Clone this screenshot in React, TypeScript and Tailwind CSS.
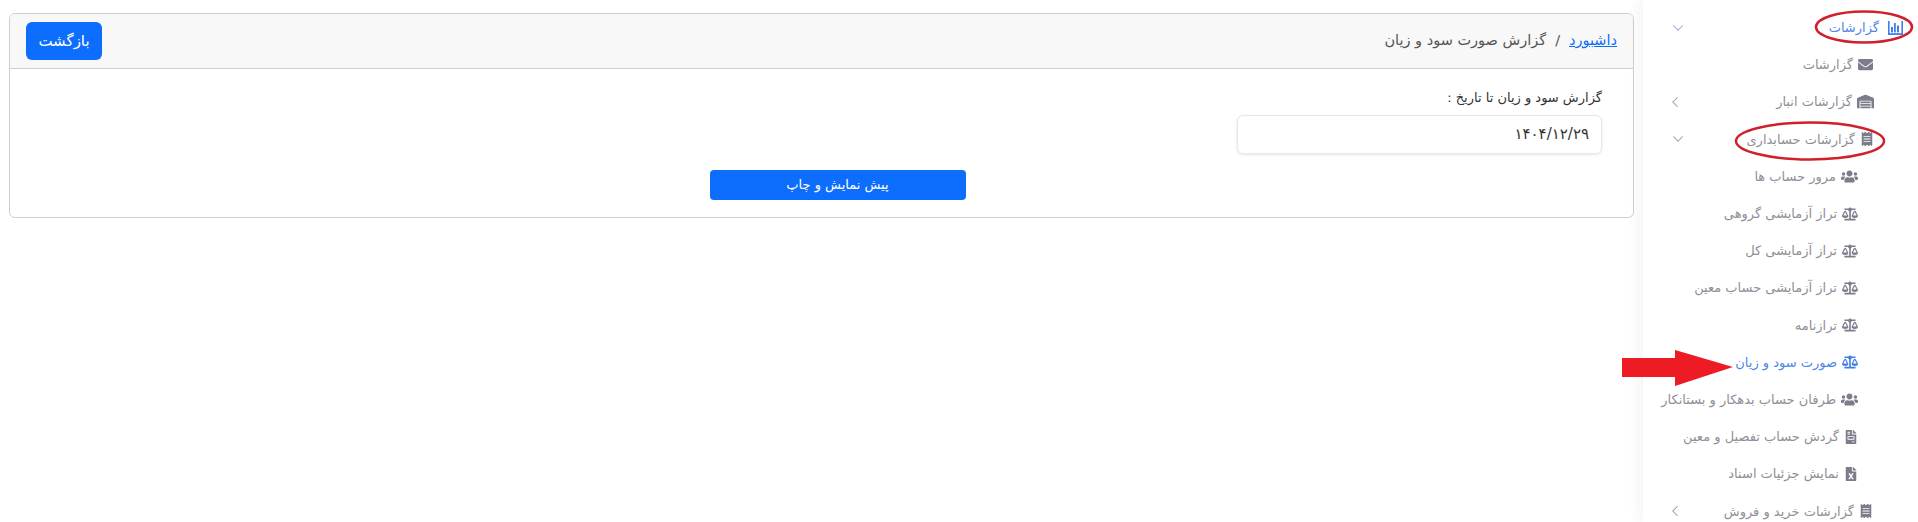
import { ChevronDown, ChevronLeft } from 'lucide-react';
import { FaBalanceScale, FaEnvelope, FaFileExcel, FaFileInvoice, FaReceipt, FaUsers, FaWarehouse } from 'react-icons/fa';

type IconComp = (props: { className?: string; size?: number }) => React.ReactNode;

type Item = {
  label: string;
  icon: IconComp;
  iconSize: number;
  right: string;
  active?: boolean;
  chevron?: 'down' | 'left';
};

function ChartIcon({ className }: { className?: string; size?: number }) {
  return (
    <svg className={className} width="15" height="14" viewBox="0 0 15 14" fill="currentColor">
      <rect x="0" y="0" width="1.6" height="14" />
      <rect x="13.4" y="0" width="1.6" height="14" />
      <rect x="0" y="12.2" width="15" height="1.8" />
      <rect x="3" y="6" width="2" height="5.4" />
      <rect x="6" y="2" width="1.8" height="9.4" />
      <rect x="9" y="4.5" width="2" height="6.9" />
    </svg>
  );
}

const items: Item[] = [
  { label: 'گزارشات', icon: ChartIcon, iconSize: 15, right: 'pr-[15px]', active: true, chevron: 'down' },
  { label: 'گزارشات', icon: FaEnvelope, iconSize: 15, right: 'pr-[45px]' },
  { label: 'گزارشات انبار', icon: FaWarehouse, iconSize: 17, right: 'pr-[44px]', chevron: 'left' },
  { label: 'گزارشات حسابداری', icon: FaReceipt, iconSize: 14, right: 'pr-[44px]', chevron: 'down' },
  { label: 'مرور حساب ها', icon: FaUsers, iconSize: 17, right: 'pr-[60px]' },
  { label: 'تراز آزمایشی گروهی', icon: FaBalanceScale, iconSize: 16, right: 'pr-[60px]' },
  { label: 'تراز آزمایشی کل', icon: FaBalanceScale, iconSize: 16, right: 'pr-[60px]' },
  { label: 'تراز آزمایشی حساب معین', icon: FaBalanceScale, iconSize: 16, right: 'pr-[60px]' },
  { label: 'ترازنامه', icon: FaBalanceScale, iconSize: 16, right: 'pr-[60px]' },
  { label: 'صورت سود و زیان', icon: FaBalanceScale, iconSize: 16, right: 'pr-[60px]', active: true },
  { label: 'طرفان حساب بدهکار و بستانکار', icon: FaUsers, iconSize: 17, right: 'pr-[60px]' },
  { label: 'گردش حساب تفصیل و معین', icon: FaFileInvoice, iconSize: 14, right: 'pr-[60px]' },
  { label: 'نمایش جزئیات اسناد', icon: FaFileExcel, iconSize: 14, right: 'pr-[60px]' },
  { label: 'گزارشات خرید و فروش', icon: FaReceipt, iconSize: 14, right: 'pr-[45px]', chevron: 'left' },
];

function SideItem({ item, first }: { item: Item; first: boolean }) {
  const Icon = item.icon;
  return (
    <div className={`flex h-[37.2px] shrink-0 items-center justify-between pl-[26px] ${item.right} ${item.active ? 'text-[#4f86e8]' : 'text-[#8f8f98]'}`}>
      <div className={`flex items-center ${first ? 'gap-[9px]' : 'gap-[5px]'}`}>
        <Icon className={item.active ? 'text-[#3f7fe6]' : 'text-[#7c7c8c]'} size={item.iconSize} />
        <span className="whitespace-nowrap text-[13px] leading-none">{item.label}</span>
      </div>
      {item.chevron === 'down' && <ChevronDown size={18} strokeWidth={1.4} className={item.active ? 'text-[#8ba8e0]' : 'text-[#999]'} />}
      {item.chevron === 'left' && <ChevronLeft size={18} strokeWidth={1.4} className="-ml-[3px] text-[#999]" />}
    </div>
  );
}

export default function App() {
  return (
    <div dir="rtl" className="relative flex h-[522px] w-[1918px] overflow-hidden bg-white font-['DejaVu_Sans',sans-serif]">
      <aside className="z-10 flex w-[275px] shrink-0 flex-col bg-white pt-[9px] shadow-[-6px_0_10px_rgba(80,80,120,0.05)]">
        {items.map((item, i) => (
          <SideItem key={i} item={item} first={i === 0} />
        ))}
      </aside>

      <main className="flex-1 pt-[13px] pr-[9px] pl-[9px]">
        <section className="h-[205px] overflow-hidden rounded-[6px] border border-[#cfcfcf] bg-white">
          <header className="flex h-[55px] items-center justify-between border-b border-[#cfcfcf] bg-[#f8f8f8] px-[16px]">
            <div className="flex items-center gap-[9px] text-[14.5px] text-[#555]">
              <a className="text-[#0d6efd] underline">داشبورد</a>
              <span>/</span>
              <span>گزارش صورت سود و زیان</span>
            </div>
            <button className="h-[38px] w-[76px] rounded-[6px] bg-[#0d6efd] text-[15px] text-white">بازگشت</button>
          </header>
          <div className="flex flex-col items-center pt-[19px] pr-[31px] pl-[63px]">
            <div className="w-full">
              <label className="block text-[13px] text-[#333]">گزارش سود و زیان تا تاریخ :</label>
              <div className="mt-[7px] flex h-[39px] w-[365px] items-center rounded-[6px] border border-[#e8e8e8] bg-white pr-[12px] text-[15px] text-[#333] shadow-[0_1px_3px_rgba(0,0,0,0.1)]">
                ۱۴۰۴/۱۲/۲۹
              </div>
            </div>
            <button className="mt-[16px] h-[30px] w-[256px] rounded-[4px] bg-[#0d6efd] text-[13px] text-white">پیش نمایش و چاپ</button>
          </div>
        </section>
      </main>

      {/* annotations drawn on top of the screenshot */}
      <svg className="pointer-events-none absolute top-0 left-0 z-20" width="1918" height="522">
        <ellipse cx="1864" cy="27" rx="48" ry="15.5" fill="none" stroke="#d0202a" strokeWidth="2.5" />
        <ellipse cx="1810" cy="141" rx="74" ry="18.5" fill="none" stroke="#d0202a" strokeWidth="2.5" />
        <polygon points="1622,358 1675,358 1675,350 1733,367 1675,386 1675,377 1622,377" fill="#ed1c24" />
      </svg>
    </div>
  );
}
